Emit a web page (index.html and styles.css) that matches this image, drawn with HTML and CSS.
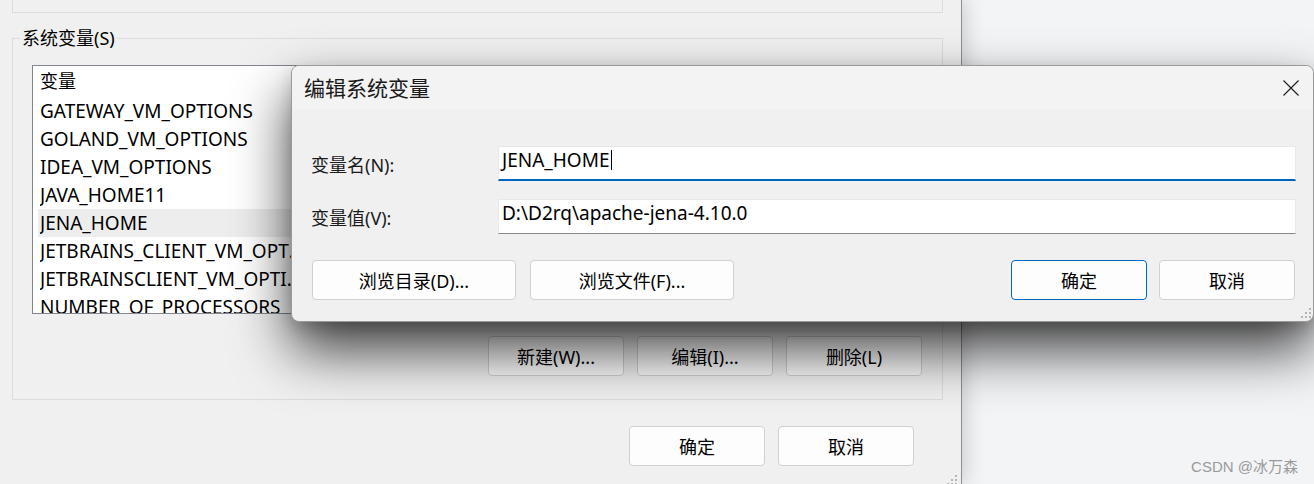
FILE: index.html
```html
<!DOCTYPE html>
<html lang="zh-CN">
<head>
<meta charset="utf-8">
<title>编辑系统变量</title>
<link rel="stylesheet" href="styles.css">
</head>
<body>
<div class="screen">
  <div class="main-win">
    <div class="top-group"></div>
    <fieldset class="group">
      <legend>系统变量(S)</legend>
      <div class="list">
        <div class="row head"><span class="name">变量</span></div>
        <div class="row"><span class="name">GATEWAY_VM_OPTIONS</span></div>
        <div class="row"><span class="name">GOLAND_VM_OPTIONS</span></div>
        <div class="row"><span class="name">IDEA_VM_OPTIONS</span></div>
        <div class="row"><span class="name">JAVA_HOME11</span></div>
        <div class="row selected"><span class="name">JENA_HOME</span></div>
        <div class="row"><span class="name">JETBRAINS_CLIENT_VM_OPTIONS</span></div>
        <div class="row"><span class="name">JETBRAINSCLIENT_VM_OPTIONS</span></div>
        <div class="row"><span class="name">NUMBER_OF_PROCESSORS</span></div>
      </div>
      <div class="btn-row">
        <button class="btn">新建(W)...</button>
        <button class="btn">编辑(I)...</button>
        <button class="btn">删除(L)</button>
      </div>
    </fieldset>
    <div class="footer">
      <button class="btn">确定</button>
      <button class="btn">取消</button>
    </div>
    <svg class="grip main-grip" width="11" height="11" viewBox="0 0 11 11"><g fill="#b5b5b5"><rect x="8" y="0" width="2" height="2"/><rect x="4" y="4" width="2" height="2"/><rect x="8" y="4" width="2" height="2"/><rect x="0" y="8" width="2" height="2"/><rect x="4" y="8" width="2" height="2"/><rect x="8" y="8" width="2" height="2"/></g></svg>
  </div>
  <div class="desktop"><span class="watermark">CSDN @冰万森</span></div>

  <div class="dialog">
    <div class="titlebar">
      <span class="title">编辑系统变量</span>
      <svg class="close" width="16" height="16" viewBox="0 0 16 16"><path d="M0.5 0.5 L15.5 15.5 M15.5 0.5 L0.5 15.5" stroke="#1a1a1a" stroke-width="1.1" fill="none"/></svg>
    </div>
    <div class="dlg-body">
      <div class="field">
        <label class="field-label">变量名(N):</label>
        <div class="input focus">JENA_HOME<span class="caret"></span></div>
      </div>
      <div class="field">
        <label class="field-label">变量值(V):</label>
        <div class="input">D:\D2rq\apache-jena-4.10.0</div>
      </div>
      <div class="dlg-buttons">
        <button class="btn wide">浏览目录(D)...</button>
        <button class="btn wide">浏览文件(F)...</button>
        <span class="spacer"></span>
        <div class="ok-cancel">
          <button class="btn primary">确定</button>
          <button class="btn">取消</button>
        </div>
      </div>
    </div>
    <svg class="grip dlg-grip" width="11" height="11" viewBox="0 0 11 11"><g fill="#b5b5b5"><rect x="8" y="0" width="2" height="2"/><rect x="4" y="4" width="2" height="2"/><rect x="8" y="4" width="2" height="2"/><rect x="0" y="8" width="2" height="2"/><rect x="4" y="8" width="2" height="2"/><rect x="8" y="8" width="2" height="2"/></g></svg>
  </div>
</div>
</body>
</html>
```

FILE: styles.css
```css
* { box-sizing: border-box; }
html, body { margin: 0; padding: 0; }
body {
  width: 1314px;
  height: 484px;
  overflow: hidden;
  background: #f3f4f6;
  font-family: "Noto Sans", "Noto Sans CJK SC", sans-serif;
  font-size: 18px;
  color: #000;
}
.screen {
  position: relative;
  display: flex;
  width: 1314px;
  height: 484px;
}

/* background window */
.main-win {
  position: relative;
  z-index: 1;
  flex: none;
  width: 962px;
  height: 484px;
  background: #f0f0f0;
  border-right: 1px solid #8e8e8e;
  padding: 0 18px 0 12px;
  box-shadow: 0 0 22px rgba(0, 0, 0, 0.22);
}
.top-group {
  width: 931px;
  height: 13px;
  border: 1px solid #dcdcdc;
  border-top: none;
}
.group {
  width: 931px;
  margin: 13px 0 0;
  min-width: 0;
  border: 1px solid #dcdcdc;
  padding: 0 20px 23px 7px;
}
.group legend {
  padding: 0 2px;
  font-size: 18px;
  line-height: 24px;
  color: #000;
}
.list {
  margin: 15px 0 0 12px;
  height: 249px;
  background: #fff;
  border: 1px solid #828790;
  overflow: hidden;
}
.row {
  margin-left: 5px;
  padding-left: 2px;
  height: 28px;
  line-height: 28px;
  font-size: 19px;
  white-space: nowrap;
}
.row.head {
  height: 31px;
  line-height: 31px;
  font-size: 18px;
}
.row.selected { background: #ededed; }
.name {
  display: block;
  width: 268px;
  overflow: hidden;
  text-overflow: ellipsis;
}
.btn-row {
  display: flex;
  justify-content: flex-end;
  gap: 13px;
  margin-top: 22px;
}
.footer {
  display: flex;
  justify-content: flex-end;
  gap: 13px;
  margin: 26px 29px 0 0;
}
.btn {
  width: 136px;
  height: 40px;
  padding: 0;
  font: inherit;
  font-size: 18px;
  color: #000;
  background: #fdfdfd;
  border: 1px solid #d0d0d0;
  border-radius: 4px;
  display: flex;
  align-items: center;
  justify-content: center;
}
.grip { position: absolute; display: block; }
.main-grip { right: 3px; bottom: -2px; }

/* desktop area */
.desktop {
  flex: 1;
  display: flex;
  align-items: flex-end;
  justify-content: flex-end;
  padding: 0 16px 7px 0;
}
.watermark {
  font-family: "Liberation Sans", "Noto Sans CJK SC", sans-serif;
  font-size: 15px;
  line-height: 20px;
  color: #9a9a9a;
}

/* dialog */
.dialog {
  position: absolute;
  left: 291px;
  top: 65px;
  z-index: 2;
  width: 1023px;
  height: 257px;
  background: #f0f0f0;
  border: 1px solid #9a9a9a;
  border-radius: 8px;
  box-shadow: 0 28px 56px rgba(0, 0, 0, 0.75), 0 6px 16px rgba(0, 0, 0, 0.15);
}
.titlebar {
  height: 43px;
  background: #f3f3f3;
  border-radius: 7px 7px 0 0;
  display: flex;
  align-items: center;
  justify-content: space-between;
  padding: 0 14px 0 12px;
}
.title {
  font-size: 21px;
  line-height: 28px;
  color: #1a1a1a;
}
.close { display: block; }
.dlg-body {
  padding: 37px 17px 0 19px;
}
.field {
  display: flex;
  align-items: center;
  height: 35px;
}
.field + .field { margin-top: 18px; }
.field-label {
  width: 187px;
  flex: none;
  font-size: 18px;
  color: #1a1a1a;
}
.input {
  flex: 1;
  height: 35px;
  background: #fff;
  border: 1px solid #e8e8e8;
  border-bottom: 1px solid #868686;
  padding: 0 3px;
  font-size: 19px;
  line-height: 26px;
  white-space: nowrap;
  color: #000;
}
.input.focus { border-bottom: 2px solid #0067c0; }
.caret {
  display: inline-block;
  width: 1px;
  height: 20px;
  margin-left: 2px;
  background: #000;
  vertical-align: -3px;
}
.dlg-buttons {
  display: flex;
  align-items: center;
  gap: 14px;
  margin-top: 26px;
  padding: 0 1px;
}
.btn.wide { width: 204px; }
.spacer { flex: 1; }
.ok-cancel { display: flex; gap: 12px; }
.btn.primary { border-color: #0067c0; }
.dlg-grip { right: 1px; bottom: 2px; }
```
